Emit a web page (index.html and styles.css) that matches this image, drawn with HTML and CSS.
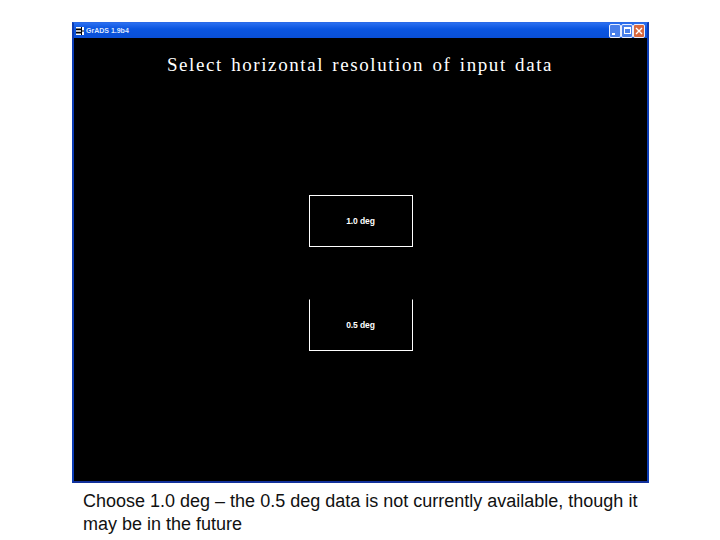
FILE: index.html
```html
<!DOCTYPE html>
<html lang="en">
<head>
    <meta charset="UTF-8">
    <title>GrADS resolution menu</title>
    <link rel="stylesheet" href="styles.css">
</head>
<body>

<div class="window">
    <div class="titlebar">
        <svg class="app-icon" width="8" height="8" viewBox="0 0 8 8">
            <rect width="8" height="8" fill="#000"/>
            <path d="M0 0h5v1.5H0zM0 3.2h5v1.5H0zM0 6.5h5V8H0zM6 0h2v3.5H6zM6 4.5h2V8H6z" fill="#fff"/>
        </svg>
        <span class="app-title">GrADS 1.9b4</span>
        <div class="controls">
            <div class="ctl"><span class="ctl-min"></span></div>
            <div class="ctl"><span class="ctl-max"></span></div>
            <div class="ctl ctl-close">
                <svg width="8" height="8" viewBox="0 0 8 8"><path d="M1 1l6 6M7 1l-6 6" stroke="#fff" stroke-width="1.4"/></svg>
            </div>
        </div>
    </div>
    <div class="screen">
        <div class="heading">Select horizontal resolution of input data</div>
        <div class="menu">
            <div class="choice">1.0 deg</div>
            <div class="choice no-top">0.5 deg</div>
        </div>
    </div>
</div>

<p class="caption">Choose 1.0 deg – the 0.5 deg data is not currently available, though it may be in the future</p>

</body>
</html>
```

FILE: styles.css
```css
body {
    margin: 0;
    background-color: #fff;
    font-family: "Liberation Sans", Arial, sans-serif;
}
.window {
    width: 573px;
    height: 458px;
    margin: 22px 0 0 72px;
    border: 2px solid #0c3cb4;
    border-top: 1px solid #2a6ae8;
    border-bottom-color: #12309a;
    display: flex;
    flex-direction: column;
}
.titlebar {
    height: 15px;
    display: flex;
    align-items: center;
    padding: 0 2px 0 2px;
    background: linear-gradient(#2a6ff0, #0a55e0 40%, #0a4fd6);
}
.app-icon {
    margin-right: 2px;
}
.app-title {
    color: #dfe8ff;
    font-size: 7px;
    font-weight: bold;
}
.controls {
    margin-left: auto;
    display: flex;
}
.ctl {
    width: 10px;
    height: 12px;
    border: 1px solid #e8eeff;
    border-radius: 2px;
    background-color: #4a80ea;
    display: flex;
    align-items: center;
    justify-content: center;
}
.ctl-min {
    width: 3px;
    height: 2px;
    margin: 6px 4px 0 0;
    background-color: #fff;
}
.ctl-max {
    width: 5px;
    height: 4px;
    border: 1px solid #fff;
    border-top-width: 2px;
}
.ctl-close {
    background-color: #d8683f;
}
.screen {
    flex: 1;
    background-color: #000;
    color: #fff;
    display: flex;
    flex-direction: column;
    align-items: center;
}
.heading {
    margin: 17px 0 0 -1px;
    font-family: "Liberation Serif", serif;
    font-size: 19px;
    line-height: 20px;
    letter-spacing: 1.58px;
    word-spacing: 2px;
    white-space: nowrap;
}
.menu {
    margin-top: 120px;
    display: flex;
    flex-direction: column;
    gap: 52px;
}
.choice {
    width: 102px;
    height: 50px;
    border: 1px solid #fff;
    display: flex;
    align-items: center;
    justify-content: center;
    font-size: 8.5px;
    font-weight: bold;
    letter-spacing: -0.1px;
}
.no-top {
    border-top-color: #000;
}
.caption {
    margin: 7px 70px 0 83px;
    font-size: 18px;
    line-height: 23px;
    color: #111;
}
```
